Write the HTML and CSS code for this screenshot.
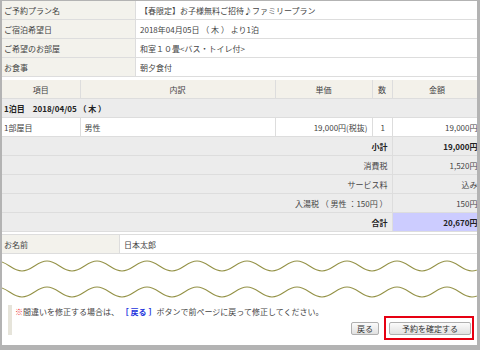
FILE: index.html
```html
<!DOCTYPE html>
<html>
<head>
    <title>ご予約内容の確認</title>
    <link rel="stylesheet" href="styles.css">
</head>
<body>
    <div class="frame">
        <div class="page">
            <table class="info">
                <tr><th>ご予約プラン名</th><td>【春限定】お子様無料ご招待♪ファミリープラン</td></tr>
                <tr><th>ご宿泊希望日</th><td>2018年04月05日 （ 木 ） より1泊</td></tr>
                <tr><th>ご希望のお部屋</th><td>和室１０畳&lt;バス・トイレ付&gt;</td></tr>
                <tr><th>お食事</th><td>朝夕食付</td></tr>
            </table>

            <table class="detail">
                <colgroup>
                    <col class="colItem">
                    <col class="colDesc">
                    <col class="colPrice">
                    <col class="colQty">
                    <col class="colAmount">
                </colgroup>
                <tr class="head">
                    <th>項目</th><th>内訳</th><th>単価</th><th>数</th><th>金額</th>
                </tr>
                <tr class="day"><td colspan="5">1泊目　2018/04/05 （ 木 ）</td></tr>
                <tr class="item">
                    <td>1部屋目</td>
                    <td>男性</td>
                    <td class="num">19,000円(税抜)</td>
                    <td class="qty">1</td>
                    <td class="num">19,000円</td>
                </tr>
                <tr class="sum bold"><td colspan="4">小計</td><td>19,000円</td></tr>
                <tr class="sum"><td colspan="4">消費税</td><td>1,520円</td></tr>
                <tr class="sum"><td colspan="4">サービス料</td><td>込み</td></tr>
                <tr class="sum"><td colspan="4">入湯税 （ 男性 ：150円 ）</td><td>150円</td></tr>
                <tr class="sum bold total"><td colspan="4">合計</td><td>20,670円</td></tr>
            </table>

            <table class="info name">
                <tr><th>お名前</th><td>日本太郎</td></tr>
            </table>

            <svg class="waves" width="475" height="50" viewBox="0 0 475 50">
                <path d="M-5,7 c10,0 15,10 25,10 s15,-10 25,-10 s15,10 25,10 s15,-10 25,-10 s15,10 25,10 s15,-10 25,-10 s15,10 25,10 s15,-10 25,-10 s15,10 25,10 s15,-10 25,-10 s15,10 25,10 s15,-10 25,-10 s15,10 25,10 s15,-10 25,-10 s15,10 25,10 s15,-10 25,-10 s15,10 25,10 s15,-10 25,-10 s15,10 25,10 s15,-10 25,-10"/>
                <path d="M-5,33 c10,0 15,10 25,10 s15,-10 25,-10 s15,10 25,10 s15,-10 25,-10 s15,10 25,10 s15,-10 25,-10 s15,10 25,10 s15,-10 25,-10 s15,10 25,10 s15,-10 25,-10 s15,10 25,10 s15,-10 25,-10 s15,10 25,10 s15,-10 25,-10 s15,10 25,10 s15,-10 25,-10 s15,10 25,10 s15,-10 25,-10 s15,10 25,10 s15,-10 25,-10"/>
            </svg>

            <div class="note">
                <p class="noteText"><span class="mark">※</span>間違いを修正する場合は、 <span class="back">［ 戻る ］</span>ボタンで前ページに戻って修正してください。</p>
                <div class="actions">
                    <button type="button" class="btn">戻る</button>
                    <div class="highlight">
                        <button type="submit" class="btn confirm">予約を確定する</button>
                    </div>
                </div>
            </div>
        </div>
    </div>
</body>
</html>
```

FILE: styles.css
```css
body {
    margin: 0;
    font-family: "Noto Sans CJK JP", "Noto Sans", sans-serif;
    font-size: 8px;
    color: #444;
}

.frame {
    width: 480px;
    height: 350px;
    box-sizing: border-box;
    padding: 1px 3px 5px 2px;
    background-color: #b3b3b3;
}

.page {
    height: 100%;
    overflow: hidden;
    background-color: #ffffff;
}

table {
    width: 480px;
    border-collapse: collapse;
    table-layout: fixed;
}

th,
td {
    height: 18px;
    padding: 0 4px;
    font-weight: normal;
    text-align: left;
    white-space: nowrap;
    border-bottom: 1px solid #dddddd;
}

.info th {
    width: 127px;
    padding-left: 2px;
    background-color: #f3f2ec;
    border-right: 1px solid #dddddd;
}

.name {
    margin-top: 2px;
    border-top: 1px solid #dddddd;
}

.name th {
    width: 111px;
}

.detail {
    margin-top: 3px;
}

.colItem { width: 78px; }
.colDesc { width: 195px; }
.colPrice { width: 97px; }
.colQty { width: 20px; }
.colAmount { width: 90px; }

.detail td,
.detail th {
    border-right: 1px solid #dddddd;
}

.head th {
    text-align: center;
    background-color: #f3f1ea;
}

.day td {
    padding-left: 2px;
    font-weight: bold;
    color: #222;
    background-color: #ececec;
}

.item td:first-child {
    padding-left: 2px;
}

.num {
    text-align: right;
}

.qty {
    padding-left: 8px;
}

.sum td {
    text-align: right;
    background-color: #ececec;
}

.bold td {
    font-weight: bold;
    color: #222;
}

.total td:last-child {
    background-color: #ccccff;
}

.waves {
    display: block;
}

.waves path {
    fill: none;
    stroke: #949247;
    stroke-width: 1.1;
}

.note {
    height: 30px;
    margin: 1px 0 0 6px;
    padding-top: 1px;
    box-sizing: border-box;
    border-left: 4px solid #e6e4da;
}

.noteText {
    margin: 0;
    padding-left: 3px;
    line-height: 12px;
}

.mark {
    color: #ee3333;
}

.back {
    font-weight: bold;
    color: #2233dd;
}

.actions {
    display: flex;
    align-items: center;
    justify-content: flex-end;
    gap: 5px;
    margin-top: -2px;
    margin-right: 3px;
}

.btn {
    height: 13px;
    padding: 0 5px;
    font-family: inherit;
    font-size: 8px;
    line-height: 11px;
    color: #333;
    background: linear-gradient(#fbfbfb, #e1e1e1);
    border: 1px solid #b0b0b0;
    border-radius: 2px;
}

.highlight {
    padding: 4px 1px 3px 3px;
    border: 2px solid #e60012;
}

.confirm {
    width: 82px;
}
```
